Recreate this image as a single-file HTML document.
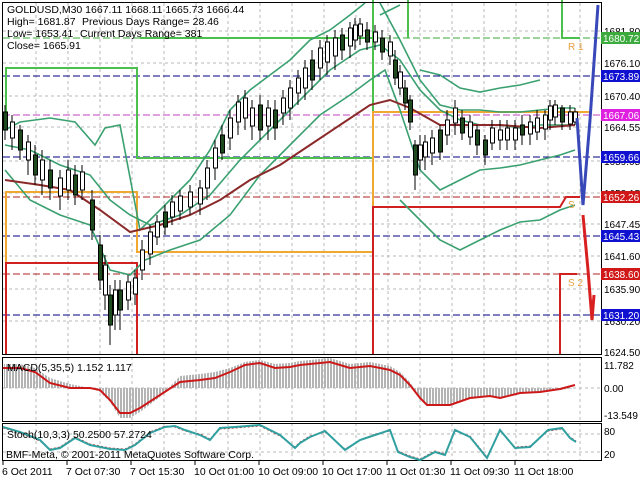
<!DOCTYPE html>
<html><head><meta charset="utf-8"><style>
html,body{margin:0;padding:0;background:#fff;width:640px;height:480px;overflow:hidden}
svg{display:block;font-family:"Liberation Sans",sans-serif}
</style></head><body>
<svg width="640" height="480" viewBox="0 0 640 480">
<defs>
<pattern id="st" width="3" height="10" patternUnits="userSpaceOnUse"><rect x="0" y="0" width="2" height="10" fill="#b4b4b4"/></pattern>
</defs>
<rect width="640" height="480" fill="#fff"/>
<g stroke="#b8b8b8" stroke-dasharray="3,3" stroke-width="1">
<path d="M36 3V460M68 3V460M100 3V460M132 3V460M164 3V460M196 3V460M228 3V460M260 3V460M292 3V460M324 3V460M356 3V460M388 3V460M420 3V460M452 3V460M484 3V460M516 3V460M548 3V460M580 3V460"/>
<path d="M3 31H601M3 63H601M3 96H601M3 127H601M3 161H601M3 193H601M3 224H601M3 256H601M3 289H601M3 321H601M3 388H601M3 434H601M3 452H601"/>
</g>
<g stroke-dasharray="7,3" stroke-width="1">
<path d="M3 38H601" stroke="#3aaa3a"/>
<path d="M3 76H601" stroke="#000080"/>
<path d="M3 115H601" stroke="#c040c0"/>
<path d="M3 157H601" stroke="#000080"/>
<path d="M3 197H601" stroke="#b02020"/>
<path d="M3 236H601" stroke="#000080"/>
<path d="M3 274H601" stroke="#b02020"/>
<path d="M3 315H601" stroke="#000080"/>
</g>
<g fill="none" stroke-width="2">
<path d="M6 115V68H137V158H373V0M140 38H373M408 0V38M562 0V38H580" stroke="#4cc04c"/>
<path d="M6 355V192H137V252H373V112H590" stroke="#f0a830"/>
<path d="M6 355V263H137V355M373 355V207H560L566 197H580M560 355V274H577" stroke="#d02020"/>
</g>
<g fill="none" stroke="#3aa070" stroke-width="1.6">
<path d="M5 130L20 122L50 118L75 122L95 145L105 128L120 125L140 230L160 210L190 180L210 150L230 110L250 90L270 75L290 60L310 40L330 30L350 15L365 3"/>
<path d="M380 3L400 40L420 80L440 105L460 110L480 110L500 112L520 112L540 110L560 108L575 108"/>
<path d="M5 170L30 200L60 215L90 225L110 270L130 275L145 260L170 250L200 240L230 215L260 175L290 145L320 115L350 95L370 80L385 70L400 110L420 170L440 190L460 180L480 170L500 168L520 165L540 160L560 155L575 150"/>
<path d="M5 145L30 150L60 165L90 175L110 200L130 215L150 225L180 215L210 195L240 160L270 130L300 100L330 70L360 50L380 45L400 60L420 90L440 110L460 120L480 125L500 125L520 128L540 125L560 125L575 125"/>
<path d="M380 15L400 5M420 70L440 75L460 88L480 92L500 88L520 85L540 80M400 200L420 220L440 240L460 250L480 240L500 230L520 222L540 220L560 210L575 205"/>
</g>
<path d="M5 180L40 185L70 190L100 210L130 232L160 225L190 215L220 200L250 180L280 165L310 145L340 125L370 105L390 100L410 108L440 125L470 125L500 125L540 128L575 125" fill="none" stroke="#8b2a2a" stroke-width="2"/>
<!-- wicks -->
<path d="M5 105V140M12 115V150M20 125V160M28 135V175M35 145V185M42 150V195M50 160V200M60 170V210M68 160V200M75 165V205M82 165V200M92 190V240M100 235V290M105 255V310M110 285V345M115 280V330M120 280V330M128 275V310M135 270V305M142 240V280M150 225V265M157 215V245M165 205V235M172 195V225M180 190V220M190 185V215M200 180V215M207 160V200M215 140V180M222 125V160M230 110V150M238 95V135M245 90V130M252 100V140M260 95V140M268 100V140M275 100V140M283 90V125M290 80V120M298 70V105M305 60V100M312 50V90M320 40V80M327 35V75M335 30V70M342 28V60M350 22V58M355 18V50M360 18V45M367 22V50M375 25V50M382 30V60M390 35V65M395 50V85M400 65V95M405 80V110M410 95V130M415 140V190M420 135V170M425 135V170M432 130V165M440 125V160M447 110V145M455 100V135M462 110V140M470 115V145M477 125V155M485 135V165M492 120V150M500 120V150M507 120V150M515 120V150M522 115V145M530 115V145M537 110V140M545 110V140M550 100V130M555 100V125M562 105V130M570 105V130M575 108V125" stroke="#000" stroke-width="1"/>
<!-- bodies -->
<g stroke="#000" stroke-width="1">
<g fill="#1e4a1e">
<rect x="3.5" y="112" width="4" height="18"/><rect x="18.5" y="130" width="4" height="20"/><rect x="33.5" y="155" width="4" height="20"/><rect x="48.5" y="170" width="4" height="18"/><rect x="73.5" y="175" width="4" height="20"/><rect x="90.5" y="200" width="4" height="30"/><rect x="98.5" y="245" width="4" height="35"/><rect x="108.5" y="295" width="4" height="30"/><rect x="118.5" y="290" width="4" height="20"/><rect x="163.5" y="212" width="4" height="15"/><rect x="220.5" y="135" width="4" height="18"/><rect x="258.5" y="105" width="4" height="25"/><rect x="273.5" y="110" width="4" height="18"/><rect x="310.5" y="60" width="4" height="20"/><rect x="340.5" y="35" width="4" height="15"/><rect x="365.5" y="30" width="4" height="12"/><rect x="380.5" y="38" width="4" height="14"/><rect x="393.5" y="60" width="4" height="18"/><rect x="403.5" y="88" width="4" height="15"/><rect x="408.5" y="100" width="4" height="22"/><rect x="413.5" y="145" width="4" height="30"/><rect x="438.5" y="130" width="4" height="22"/><rect x="460.5" y="118" width="4" height="15"/><rect x="475.5" y="130" width="4" height="15"/><rect x="483.5" y="140" width="4" height="15"/><rect x="520.5" y="125" width="4" height="10"/><rect x="560.5" y="108" width="4" height="14"/>
</g>
<g fill="#fff">
<rect x="10.5" y="122" width="4" height="16"/><rect x="26.5" y="142" width="4" height="18"/><rect x="40.5" y="160" width="4" height="20"/><rect x="58.5" y="178" width="4" height="18"/><rect x="66.5" y="170" width="4" height="20"/><rect x="80.5" y="172" width="4" height="18"/><rect x="103.5" y="265" width="4" height="30"/><rect x="113.5" y="290" width="4" height="25"/><rect x="126.5" y="282" width="4" height="18"/><rect x="133.5" y="278" width="4" height="16"/><rect x="140.5" y="250" width="4" height="20"/><rect x="148.5" y="232" width="4" height="22"/><rect x="155.5" y="222" width="4" height="15"/><rect x="170.5" y="202" width="4" height="15"/><rect x="178.5" y="196" width="4" height="15"/><rect x="188.5" y="192" width="4" height="15"/><rect x="198.5" y="188" width="4" height="16"/><rect x="205.5" y="168" width="4" height="20"/><rect x="213.5" y="148" width="4" height="20"/><rect x="228.5" y="118" width="4" height="20"/><rect x="236.5" y="102" width="4" height="20"/><rect x="243.5" y="98" width="4" height="20"/><rect x="250.5" y="108" width="4" height="18"/><rect x="266.5" y="108" width="4" height="18"/><rect x="281.5" y="98" width="4" height="15"/><rect x="288.5" y="88" width="4" height="20"/><rect x="296.5" y="78" width="4" height="15"/><rect x="303.5" y="68" width="4" height="20"/><rect x="318.5" y="48" width="4" height="20"/><rect x="325.5" y="42" width="4" height="20"/><rect x="333.5" y="38" width="4" height="18"/><rect x="348.5" y="28" width="4" height="18"/><rect x="353.5" y="25" width="4" height="15"/><rect x="358.5" y="24" width="4" height="12"/><rect x="373.5" y="32" width="4" height="10"/><rect x="388.5" y="42" width="4" height="14"/><rect x="398.5" y="72" width="4" height="16"/><rect x="418.5" y="145" width="4" height="15"/><rect x="423.5" y="142" width="4" height="15"/><rect x="430.5" y="138" width="4" height="15"/><rect x="445.5" y="120" width="4" height="15"/><rect x="453.5" y="108" width="4" height="15"/><rect x="468.5" y="122" width="4" height="15"/><rect x="490.5" y="128" width="4" height="15"/><rect x="498.5" y="130" width="4" height="10"/><rect x="505.5" y="128" width="4" height="12"/><rect x="513.5" y="128" width="4" height="12"/><rect x="528.5" y="122" width="4" height="12"/><rect x="535.5" y="118" width="4" height="14"/><rect x="543.5" y="115" width="4" height="14"/><rect x="548.5" y="106" width="4" height="14"/><rect x="553.5" y="105" width="4" height="12"/><rect x="568.5" y="112" width="4" height="12"/><rect x="573.5" y="112" width="4" height="10"/>
</g>
</g>
<path d="M577 118L583 205L590 120L598 5" fill="none" stroke="#3848b8" stroke-width="3"/>
<path d="M583 215L588 270L592 320L594 295" fill="none" stroke="#d82020" stroke-width="3"/>
<g font-size="10" fill="#e8a040"><text x="568" y="50">R 1</text><text x="568" y="208">S</text><text x="568" y="286">S 2</text></g>
<g fill="none" stroke="#000" stroke-width="1">
<rect x="2.5" y="2.5" width="599" height="352"/>
<rect x="2.5" y="357.5" width="599" height="64"/>
<rect x="2.5" y="423.5" width="599" height="37"/>
</g>
<path d="M4 388L4 364L20 364L35 368L50 378L70 384L90 388L100 392L110 402L120 418L130 418L140 412L160 397L180 376L200 374L215 372L230 368L245 362L260 360L275 364L290 363L300 361L330 358L350 364L370 362L390 366L400 372L410 382L420 398L427 405L450 405L470 398L490 396L500 397L520 393L540 392L560 390L575 388Z" fill="url(#st)"/>
<path d="M3 368L20 368L35 372L50 383L70 388L90 388L100 390L110 400L120 413L130 413L140 408L160 395L180 382L200 380L215 378L230 372L245 365L260 363L275 368L290 367L300 365L330 362L350 368L370 366L390 370L400 375L410 385L420 398L427 405L450 405L470 398L490 396L500 398L520 393L540 392L560 389L575 385" fill="none" stroke="#cc1818" stroke-width="2"/>
<path d="M3 428L20 433L40 441L50 449L60 447L75 437L90 444L100 446L110 448L125 449L135 444L150 432L165 426L175 427L185 431L200 434L210 439L220 429L235 428L260 426L280 436L295 447L300 442L310 436L325 432L345 449L360 440L375 434L390 431L398 451L410 456L420 459L435 451L445 454L455 431L470 436L487 457L500 431L515 447L530 446L548 431L562 429L570 437L576 441" fill="none" stroke="#c03030" stroke-width="1" stroke-dasharray="2,2"/>
<path d="M3 427L20 432L40 440L50 450L60 448L75 438L90 445L100 447L110 449L125 450L135 445L150 433L165 427L175 426L185 430L200 435L210 440L220 428L235 427L260 425L280 435L295 448L300 443L310 437L325 431L345 450L360 440L375 435L390 430L398 452L410 457L420 460L435 452L445 455L455 430L470 437L487 458L500 430L515 448L530 447L548 430L562 428L570 438L576 442" fill="none" stroke="#30a0a0" stroke-width="2"/>
<g font-size="10.5" fill="#000">
<text x="7" y="13">GOLDUSD,M30  1667.11 1668.11 1665.73 1666.44</text>
<text x="7" y="25">High= 1681.87</text><text x="82" y="25">Previous Days Range= 28.46</text>
<text x="7" y="37">Low= 1653.41</text><text x="80" y="37">Current Days Range= 381</text>
<text x="7" y="49">Close= 1665.91</text>
<text x="7" y="371">MACD(5,35,5) 1.152 1.117</text>
<text x="7" y="438">Stoch(10,3,3) 50.2500 57.2724</text>
<text x="6" y="458">BMF-Meta, © 2001-2011 MetaQuotes Software Corp.</text>
</g>
<g font-size="10" fill="#000">
<text x="604" y="35">1681.80</text><text x="604" y="67">1676.10</text><text x="604" y="100">1670.40</text><text x="604" y="131">1664.55</text><text x="604" y="165">1659.05</text><text x="604" y="197">1653.15</text><text x="604" y="228">1647.45</text><text x="604" y="260">1641.60</text><text x="604" y="293">1635.90</text><text x="604" y="325">1630.20</text><text x="604" y="356">1624.50</text>
<text x="604" y="369">11.782</text><text x="604" y="392">0.00</text><text x="604" y="419">-13.549</text>
<text x="604" y="435">80</text><text x="604" y="458">20</text>
</g>
<g font-size="10" fill="#fff">
<rect x="601" y="32" width="39" height="12" fill="#3caa3c"/><text x="603" y="42">1680.72</text>
<rect x="601" y="70" width="39" height="12" fill="#1010d0"/><text x="603" y="80">1673.89</text>
<rect x="601" y="109" width="39" height="12" fill="#e020e0"/><text x="603" y="119">1667.06</text>
<rect x="601" y="151" width="39" height="12" fill="#1010d0"/><text x="603" y="161">1659.66</text>
<rect x="601" y="191" width="39" height="12" fill="#d01818"/><text x="603" y="201">1652.26</text>
<rect x="601" y="230" width="39" height="12" fill="#1010d0"/><text x="603" y="240">1645.43</text>
<rect x="601" y="268" width="39" height="12" fill="#d01818"/><text x="603" y="278">1638.60</text>
<rect x="601" y="309" width="39" height="12" fill="#1010d0"/><text x="603" y="319">1631.20</text>
</g>
<g font-size="10.5" fill="#000">
<text x="2" y="475">6 Oct 2011</text><text x="66" y="475">7 Oct 07:30</text><text x="130" y="475">7 Oct 15:30</text><text x="194" y="475">10 Oct 01:00</text><text x="258" y="475">10 Oct 09:00</text><text x="322" y="475">10 Oct 17:00</text><text x="386" y="475">11 Oct 01:30</text><text x="450" y="475">11 Oct 09:30</text><text x="514" y="475">11 Oct 18:00</text>
</g>
<g stroke="#000"><path d="M3 461V465M67 461V465M131 461V465M195 461V465M259 461V465M323 461V465M387 461V465M451 461V465M515 461V465"/></g>
</svg>
</body></html>
